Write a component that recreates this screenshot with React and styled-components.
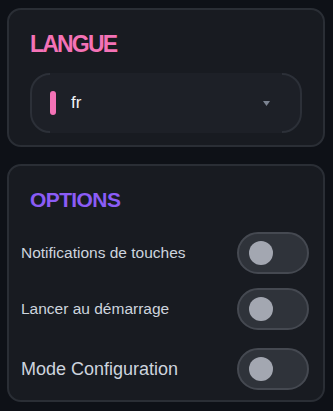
import React, { useState } from "react";
import styled, { createGlobalStyle } from "styled-components";

const GlobalStyle = createGlobalStyle`
  html, body {
    margin: 0;
    background: #0e1117;
  }
  body {
    font-family: "Liberation Sans", Arial, sans-serif;
  }
`;

const Page = styled.div`
  width: 333px;
  min-height: 411px;
  box-sizing: border-box;
  padding: 8px 8px 8px 7px;
  display: flex;
  flex-direction: column;
  gap: 17px;
`;

const Card = styled.section`
  background: #181b21;
  border: 2px solid #2a2e35;
  border-radius: 14px;
  padding: ${(p) => p.$pad};
  display: flex;
  flex-direction: column;
`;

const Title = styled.h2`
  margin: 0 0 ${(p) => p.$gap}px ${(p) => p.$indent}px;
  font-size: ${(p) => p.$size}px;
  line-height: ${(p) => p.$lh}px;
  font-weight: 700;
  letter-spacing: ${(p) => p.$spacing}px;
  color: ${(p) => p.$color};
`;

const Select = styled.div`
  position: relative;
  height: 60px;
  box-sizing: border-box;
  border: 2px solid #2c3038;
  border-radius: 20px;
  background: #1d2027;
  display: flex;
  align-items: center;
  padding: 0 30px 0 18px;
  cursor: pointer;

  /* the straight top and bottom edges have no visible line */
  &::before,
  &::after {
    content: "";
    position: absolute;
    left: 18px;
    right: 18px;
    height: 2px;
    background: #1d2027;
  }
  &::before {
    top: -2px;
  }
  &::after {
    bottom: -2px;
  }
`;

const Accent = styled.span`
  width: 6px;
  height: 24px;
  border-radius: 3px;
  background: #f472b6;
  margin-right: 15px;
  flex-shrink: 0;
`;

const Value = styled.span`
  flex: 1;
  color: #f1f3f6;
  font-size: 17px;
`;

const Caret = styled.svg`
  width: 7px;
  height: 5px;
`;

const Row = styled.div`
  display: flex;
  align-items: center;
  justify-content: space-between;
  height: 42px;
  margin-top: ${(p) => p.$top}px;
`;

const Label = styled.span`
  color: #cdd4de;
  font-size: ${(p) => p.$size}px;
`;

const Toggle = styled.button`
  width: 72px;
  height: 42px;
  box-sizing: border-box;
  border: 2px solid #454951;
  border-radius: 21px;
  background: ${(p) => (p.$on ? "#8b5cf6" : "#2f333a")};
  padding: 0;
  display: flex;
  align-items: center;
  cursor: pointer;

  span {
    width: 24px;
    height: 24px;
    border-radius: 50%;
    background: #a3a7b1;
    margin-left: ${(p) => (p.$on ? 36 : 10)}px;
    transition: margin-left 0.2s;
  }
`;

const options = [
  { key: "notif", label: "Notifications de touches", size: 15.5, top: 0 },
  { key: "start", label: "Lancer au démarrage", size: 15.5, top: 14 },
  { key: "config", label: "Mode Configuration", size: 18, top: 18 },
];

export default function App() {
  const [state, setState] = useState({ notif: false, start: false, config: false });

  return (
    <>
      <GlobalStyle />
      <Page>
        <Card $pad="21px 21px 12px 21px">
          <Title $size={23} $lh={26} $spacing={-1.8} $gap={16} $indent={0} $color="#f472b6">
            LANGUE
          </Title>
          <Select>
            <Accent />
            <Value>fr</Value>
            <Caret viewBox="0 0 7 5">
              <path d="M0 0h7L3.5 5z" fill="#7c8492" />
            </Caret>
          </Select>
        </Card>

        <Card $pad="22px 14px 10px 12px">
          <Title $size={21} $lh={24} $spacing={-0.6} $gap={20} $indent={9} $color="#8b5cf6">
            OPTIONS
          </Title>
          {options.map((o) => (
            <Row key={o.key} $top={o.top}>
              <Label $size={o.size}>{o.label}</Label>
              <Toggle
                $on={state[o.key]}
                onClick={() => setState((s) => ({ ...s, [o.key]: !s[o.key] }))}
              >
                <span />
              </Toggle>
            </Row>
          ))}
        </Card>
      </Page>
    </>
  );
}
